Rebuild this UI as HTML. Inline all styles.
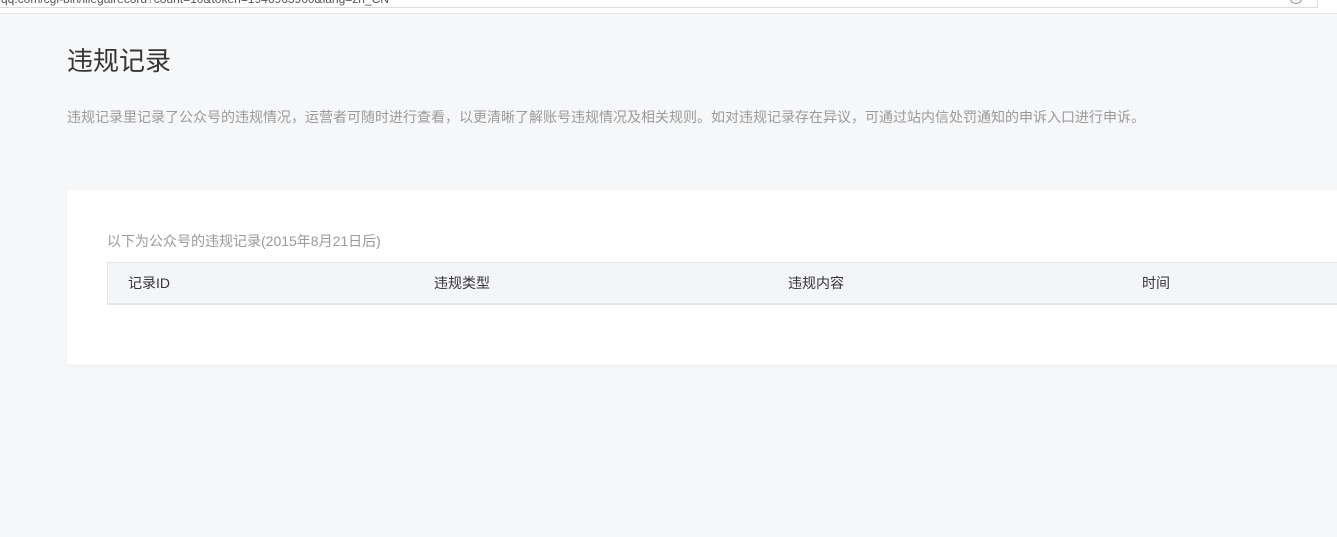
<!DOCTYPE html>
<html><head><meta charset="utf-8"><style>
*{margin:0;padding:0;box-sizing:border-box}
body{width:1337px;height:537px;overflow:hidden;background:#f6f7f9;font-family:"Liberation Sans","Microsoft YaHei","Noto Sans CJK SC",sans-serif;position:relative}
.top{position:absolute;left:0;top:0;width:1337px;height:14px;background:#fff;border-bottom:1px solid #e4e4e4}
.url{position:absolute;left:-2px;top:-6px;width:1320px;height:14px;border:1px solid #ddd;border-top:none;background:#fff;font-size:12px;color:#555;line-height:10px;white-space:nowrap;overflow:hidden;padding-left:2px}
.circ{position:absolute;left:1290px;top:-6px;width:12px;height:10px;border:1px solid #888;border-radius:50%}
h1{position:absolute;left:67px;top:44px;font-size:26px;font-weight:normal;color:#353535;line-height:34px}
.desc{position:absolute;left:67px;top:107px;font-size:14px;color:#9a9a9a;line-height:20px;white-space:nowrap}
.card{position:absolute;left:67px;top:190px;width:1280px;height:175px;background:#fff;border-radius:3px;box-shadow:0 1px 2px rgba(0,0,0,.05)}
.sub{position:absolute;left:107px;top:231px;font-size:14px;color:#9a9a9a;line-height:20px;white-space:nowrap}
.th{position:absolute;left:107px;top:262px;width:1240px;height:43px;background:#f4f5f9;border:1px solid #e4e6eb;border-bottom:2px solid #e4e6eb;font-size:14px;color:#353535}
.th span{position:absolute;top:11px;line-height:18px}
</style></head><body>
<div class="top"><div class="url">qq.com/cgi-bin/illegalrecord?count=10&amp;token=1946963960&amp;lang=zh_CN</div><div class="circ"></div></div>
<h1>违规记录</h1>
<div class="desc">违规记录里记录了公众号的违规情况，运营者可随时进行查看，以更清晰了解账号违规情况及相关规则。如对违规记录存在异议，可通过站内信处罚通知的申诉入口进行申诉。</div>
<div class="card"></div>
<div class="sub">以下为公众号的违规记录(2015年8月21日后)</div>
<div class="th"><span style="left:20px">记录ID</span><span style="left:326px">违规类型</span><span style="left:680px">违规内容</span><span style="left:1034px">时间</span></div>
</body></html>
